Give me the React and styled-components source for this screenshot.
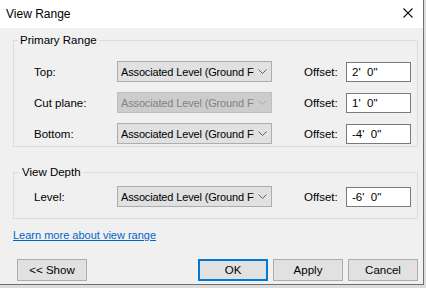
import React from "react"
import styled, { createGlobalStyle } from "styled-components"

const GlobalStyle = createGlobalStyle`
  html, body {
    margin: 0;
    padding: 0;
    background: #dcdcdc;
  }
  body {
    font-family: "Liberation Sans", Arial, sans-serif;
    font-size: 11px;
    color: #000;
  }
`

const primaryRows = [
  { label: "Top:", offset: "2'  0\"" },
  { label: "Cut plane:", offset: "1'  0\"", disabled: true },
  { label: "Bottom:", offset: "-4'  0\"" }
]

const Chevron = ({ disabled }) => (
  <svg width="9" height="5" viewBox="0 0 9 5">
    <path
      d="M0.5 0.5L4.5 4.5L8.5 0.5"
      fill="none"
      stroke={disabled ? "#a8a8a8" : "#606060"}
      strokeWidth="1"
    />
  </svg>
)

const CloseIcon = () => (
  <svg width="10" height="10" viewBox="0 0 10 10">
    <path d="M0.5 0.5L9.5 9.5M9.5 0.5L0.5 9.5" stroke="#111" strokeWidth="1.1" />
  </svg>
)

const Combo = ({ disabled }) => (
  <Select disabled={disabled}>
    <SelectText>Associated Level (Ground Fl</SelectText>
    <Arrow>
      <Chevron disabled={disabled} />
    </Arrow>
  </Select>
)

const Row = ({ label, offset, disabled }) => (
  <RowGrid>
    <Label>{label}</Label>
    <Combo disabled={disabled} />
    <span />
    <Label>Offset:</Label>
    <Input>{offset}</Input>
  </RowGrid>
)

export default function App() {
  return (
    <>
      <GlobalStyle />
      <Dialog>
        <TitleBar>
          <Title>View Range</Title>
          <CloseButton>
            <CloseIcon />
          </CloseButton>
        </TitleBar>
        <Body>
          <Group top={4} gap={10} padTop={13} padBottom={2}>
            <Legend>Primary Range</Legend>
            {primaryRows.map((r) => (
              <Row key={r.label} {...r} />
            ))}
          </Group>
          <Group top={17} gap={0} padTop={6} padBottom={11}>
            <Legend indent={-14}>View Depth</Legend>
            <Row label="Level:" offset={"-6'  0\""} />
          </Group>
          <LinkRow>
            <Link>Learn more about view range</Link>
          </LinkRow>
          <Footer>
            <Button>&lt;&lt; Show</Button>
            <Spacer />
            <Button primary>OK</Button>
            <Button>Apply</Button>
            <Button>Cancel</Button>
          </Footer>
        </Body>
      </Dialog>
    </>
  )
}

const Dialog = styled.div`
  width: 423px;
  height: 284px;
  background: #f0f0f0;
  border-right: 1px solid #6f6f6f;
  border-bottom: 1px solid #6f6f6f;
  display: flex;
  flex-direction: column;
`

const TitleBar = styled.div`
  height: 28px;
  background: #fff;
  display: flex;
  align-items: center;
  justify-content: space-between;
  padding: 0 10px 0 6px;
`

const Title = styled.div`
  font-size: 12px;
`

const CloseButton = styled.div`
  display: flex;
  align-items: center;
  margin-top: -3px;
`

const Body = styled.div`
  display: flex;
  flex-direction: column;
  padding: 0 5px 0 13px;
`

const Group = styled.fieldset`
  margin: ${(p) => p.top}px 0 0 0;
  padding: ${(p) => p.padTop}px 6px ${(p) => p.padBottom}px 20px;
  border: 1px solid #dcdcdc;
  display: flex;
  flex-direction: column;
  gap: ${(p) => p.gap}px;
  min-width: 0;
`

const Legend = styled.legend`
  padding: 0 2px;
  margin-left: ${(p) => p.indent ?? -16}px;
  line-height: 16px;
  font-size: 11.5px;
`

const RowGrid = styled.div`
  display: grid;
  grid-template-columns: 83px 155px 1fr 42px 65px;
  align-items: center;
  height: 21px;
`

const Label = styled.span`
  white-space: nowrap;
  font-size: 11.5px;
`

const Select = styled.div`
  height: 21px;
  box-sizing: border-box;
  border: 1px solid ${(p) => (p.disabled ? "#bfbfbf" : "#adadad")};
  background: ${(p) => (p.disabled ? "#cccccc" : "#e1e1e1")};
  color: ${(p) => (p.disabled ? "#838383" : "#000")};
  display: flex;
  align-items: center;
  padding: 0 4px 0 3px;
  font-size: 11px;
`

const SelectText = styled.span`
  flex: 1;
  overflow: hidden;
  white-space: nowrap;
  letter-spacing: -0.15px;
`

const Arrow = styled.span`
  width: 13px;
  display: flex;
  justify-content: flex-end;
  align-items: center;
`

const Input = styled.div`
  height: 20px;
  box-sizing: border-box;
  border: 1px solid #7a7a7a;
  background: #fff;
  padding-left: 5px;
  display: flex;
  align-items: center;
  white-space: pre;
  font-size: 11.5px;
`

const LinkRow = styled.div`
  margin-top: 8px;
  height: 16px;
  display: flex;
  align-items: center;
`

const Link = styled.a`
  color: #0066cc;
  text-decoration: underline;
  cursor: pointer;
`

const Footer = styled.div`
  margin-top: 16px;
  display: flex;
  gap: 5px;
  padding: 0 0 0 4px;
`

const Spacer = styled.div`
  flex: 1;
`

const Button = styled.div`
  width: 70px;
  height: 22px;
  box-sizing: border-box;
  background: #e1e1e1;
  border: ${(p) => (p.primary ? "2px solid #0078d7" : "1px solid #adadad")};
  display: flex;
  align-items: center;
  justify-content: center;
  font-size: 11.5px;
`
